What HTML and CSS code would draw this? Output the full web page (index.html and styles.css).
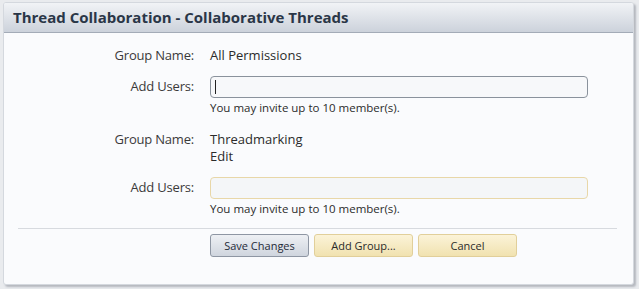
FILE: index.html
```html
<!DOCTYPE html>
<html>
<head>
<meta charset="utf-8">
<link rel="stylesheet" href="styles.css">
</head>
<body>
<div class="overlay">
  <h2 class="heading">Thread Collaboration - Collaborative Threads</h2>
  <form class="form">
    <dl class="row row-first">
      <dt class="label">Group Name:</dt>
      <dd class="value">All Permissions</dd>
    </dl>
    <dl class="row row-input">
      <dt class="label label-input">Add Users:</dt>
      <dd class="value">
        <div class="textbox focused"><span class="caret"></span></div>
        <p class="hint">You may invite up to 10 member(s).</p>
      </dd>
    </dl>
    <dl class="row row-group">
      <dt class="label">Group Name:</dt>
      <dd class="value">
        <div>Threadmarking</div>
        <div>Edit</div>
      </dd>
    </dl>
    <dl class="row row-input2">
      <dt class="label label-input">Add Users:</dt>
      <dd class="value">
        <div class="textbox disabled"></div>
        <p class="hint">You may invite up to 10 member(s).</p>
      </dd>
    </dl>
    <div class="submit">
      <div class="buttons">
        <button type="button" class="button primary">Save Changes</button>
        <button type="button" class="button">Add Group...</button>
        <button type="button" class="button">Cancel</button>
      </div>
    </div>
  </form>
</div>
</body>
</html>
```

FILE: styles.css
```css
html, body {
  margin: 0;
  padding: 0;
  background: #e9ebee;
  height: 100%;
}
body {
  font-family: "Open Sans", "Noto Sans", sans-serif;
  font-size: 13px;
  color: #2b2b2b;
}
.overlay {
  box-sizing: border-box;
  margin: 2px 5px 0 3px;
  height: 283px;
  background: #fafbfd;
  border: 1px solid #d4d8de;
  border-radius: 3px;
  box-shadow: 2px 2px 2px rgba(120,125,135,0.45);
  overflow: hidden;
}
.heading {
  margin: 0;
  height: 29px;
  line-height: 29px;
  padding-left: 9px;
  font-size: 15px;
  font-weight: bold;
  color: #2a3647;
  background: linear-gradient(#f1f3f6, #ccd2db);
  border-bottom: 1px solid #a3abb7;
}
.form {
  padding: 14px 0 0;
}
.row {
  display: grid;
  grid-template-columns: 190px 1fr;
  column-gap: 16px;
  margin: 0;
  line-height: 17px;
}
.label {
  text-align: right;
  color: #3a3a3a;
  letter-spacing: -0.2px;
}
.value {
  margin: 0;
  color: #2b2b2b;
}
.label-input {
  padding-top: 2px;
}
.row-input {
  margin-top: 12px;
}
.row-group {
  margin-top: 16px;
}
.row-input2 {
  margin-top: 12px;
}
.textbox {
  box-sizing: border-box;
  width: 378px;
  height: 22px;
  border-radius: 4px;
  background: #f5f6f8;
  position: relative;
}
.focused {
  border: 1px solid #8a929c;
  background: #f7f8fa;
}
.caret {
  position: absolute;
  left: 4px;
  top: 3px;
  width: 1px;
  height: 14px;
  background: #222;
}
.disabled {
  border: 1px solid #e8d7a8;
  background: #f4f6f8;
}
.hint {
  margin: 3px 0 0;
  font-size: 11.5px;
  line-height: 14px;
  color: #2b2b2b;
}
.submit {
  margin: 12px 16px 0 14px;
  border-top: 1px solid #d7dadf;
  padding-top: 5px;
}
.buttons {
  display: flex;
  gap: 5px;
  padding-left: 192px;
}
.button {
  box-sizing: border-box;
  width: 99px;
  height: 23px;
  font-family: "Open Sans", "Noto Sans", sans-serif;
  font-size: 11px;
  color: #2b2b2b;
  border: 1px solid #e1cf9a;
  border-radius: 3px;
  background: linear-gradient(#fbf3d8, #f1e2b0);
  padding: 0;
}
.button.primary {
  border-color: #8e96a3;
  background: linear-gradient(#eef0f4, #cfd5de);
  color: #1f2a38;
}
```
